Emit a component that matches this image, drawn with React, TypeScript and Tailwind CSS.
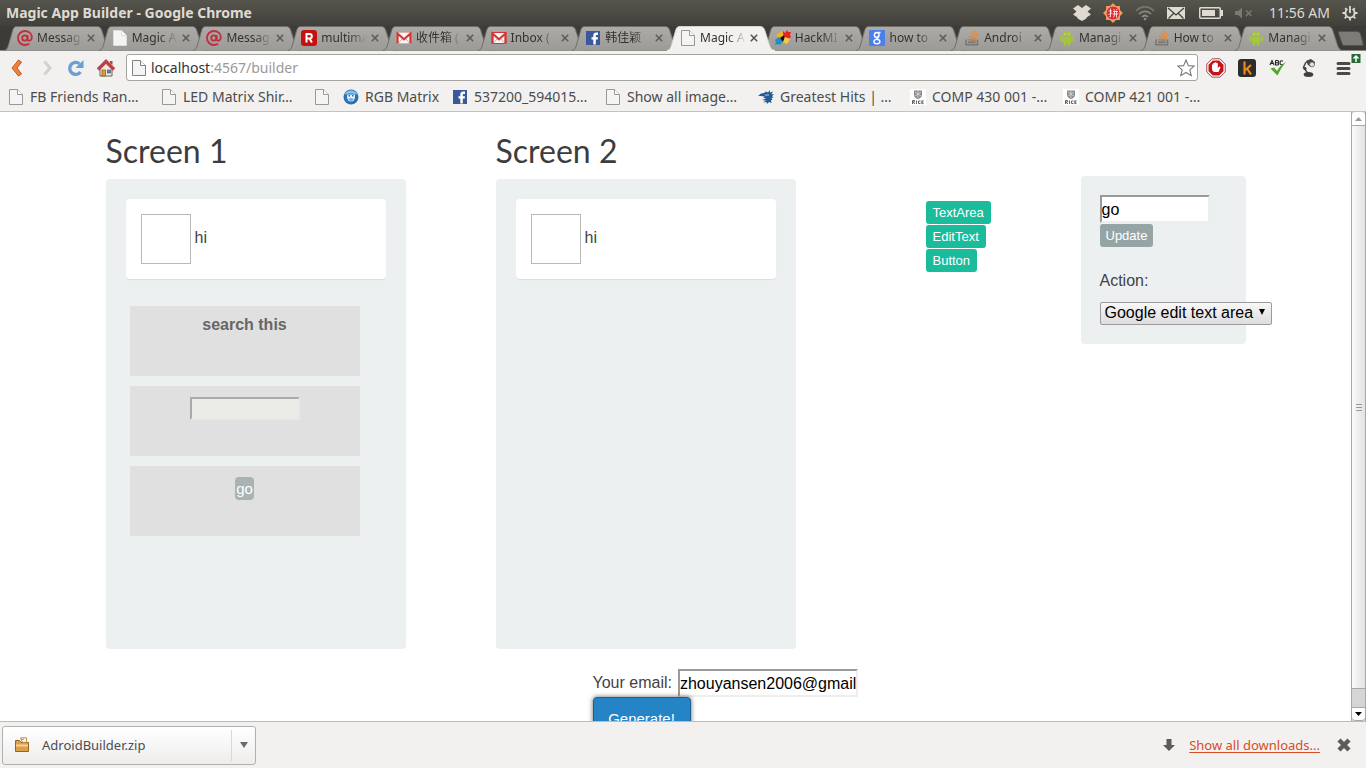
import type { ReactNode } from "react";

const ui = "font-['Noto_Sans','Noto_Sans_CJK_SC',sans-serif]";

/* ---------- icons ---------- */

function AtIcon() {
  return (
    <svg viewBox="0 0 16 16" className="size-4 shrink-0" fill="none" stroke="#c32d3c" strokeWidth="1.8">
      <circle cx="7.8" cy="8" r="2.6" />
      <path d="M10.6 5v4.2c0 2.2 3.4 2 4-.4C15.600 4.500 12.400 1 8.200 1 4 1 1 4 1 8s3 7 7 7c1.700 0 3-.4 4.200-1.200" />
    </svg>
  );
}

function PageIcon({ fill = "#f4f4f4", stroke = "#989896" }: { fill?: string; stroke?: string }) {
  return (
    <svg viewBox="0 0 16 16" className="size-4 shrink-0" fill={fill} stroke={stroke}>
      <path d="M1.500.5H9.500L14.500 5.500V15.500H1.500Z" />
      <path d="M9.500.5V5.500H14.500" fill="#fff" />
    </svg>
  );
}

function RedRIcon() {
  return (
    <svg viewBox="0 0 16 16" className="size-4 shrink-0">
      <rect width="16" height="16" rx="3" fill="#c5120f" />
      <path d="M5.500 12.500V4H8.500a2.200 2.200 0 0 1 0 4.600H5.500M8.500 8.600l2.400 3.900" fill="none" stroke="#fff" strokeWidth="2" />
    </svg>
  );
}

function MailIcon({ soft = false }: { soft?: boolean }) {
  return (
    <svg viewBox="0 0 16 16" className="size-4 shrink-0">
      <rect x="1" y="2.500" width="14" height="11" fill="#fbf4f2" stroke={soft ? "#d9a49c" : "#d5333a"} strokeWidth={soft ? 0.6 : 1} />
      <path d="M2 13.500 6.500 8.500M14 13.500 9.500 8.500" stroke="#d9aaa5" fill="none" />
      <path d="M1.600 13.500V3.500L8 9.300l6.400-5.800v10" fill="none" stroke="#cf3a36" strokeWidth="2.100" />
    </svg>
  );
}

function FacebookIcon() {
  return (
    <svg viewBox="0 0 16 16" className="size-4 shrink-0">
      <rect x="1" y="1" width="14" height="14" fill="#3b5998" />
      <path d="M8.300 14.500V9.500H6.500V7.200H8.300V5.600C8.300 3.500 9.400 2.600 11.200 2.600H13V4.900H11.700C11 4.900 10.800 5.200 10.800 5.900V7.200H13L12.700 9.500H10.800V14.500Z" fill="#fff" />
    </svg>
  );
}

function PinwheelIcon() {
  return (
    <svg viewBox="0 0 16 16" className="size-4 shrink-0">
      <path d="M8 1 10 3 12 0l1 2 3 0-1 3 1 2-3 2L8 7Z" fill="#e62424" />
      <path d="M1 5 7 1 9 6 5 9Z" fill="#f5b51b" />
      <path d="M0 10 4 7 8 11 5 15 3 14 0 15 1 12Z" fill="#1b8fcd" />
      <path d="M5 8 9 5 10 10 8 12Z" fill="#151515" />
      <path d="M10 7 15 9 12 14 8 12Z" fill="#f3cf3c" />
    </svg>
  );
}

function GoogleIcon() {
  return (
    <svg viewBox="0 0 16 16" className="size-4 shrink-0">
      <rect width="16" height="16" rx="1" fill="#4a80ee" />
      <g fill="none" stroke="#fff" strokeWidth="1.400">
        <ellipse cx="7.700" cy="5" rx="2.300" ry="2.500" />
        <path d="M9.500 2.500H11.500M9.300 7c-3 1.200-.8 1.800.7 2.700" />
        <ellipse cx="7.900" cy="11.600" rx="3" ry="2.200" />
      </g>
    </svg>
  );
}

function StackIcon() {
  return (
    <svg viewBox="0 0 16 16" className="size-4 shrink-0" fill="none">
      <path d="M2 9.500V14.700H13.500V9.500" stroke="#777" strokeWidth="1.600" />
      <path d="M4 12.300H11.500" stroke="#77736f" strokeWidth="1.600" />
      <path d="M4.200 9.700 11.700 10.400" stroke="#a98254" strokeWidth="1.600" />
      <path d="M5 6.600 12.200 8.700" stroke="#d18b45" strokeWidth="1.600" />
      <path d="M7 3.300 13 7.200M10.200.8 14.200 6" stroke="#f08a35" strokeWidth="1.700" />
    </svg>
  );
}

function AndroidIcon() {
  return (
    <svg viewBox="0 0 16 16" className="size-4 shrink-0" fill="#a4c639">
      <path d="M3.500 5.800a4.500 4.300 0 0 1 9 0Z" />
      <path d="M5 .8 6.300 2.800M11 .8 9.700 2.800" stroke="#a4c639" strokeWidth=".8" />
      <path d="M3.500 6.400h9v5.600a1 1 0 0 1-1 1h-7a1 1 0 0 1-1-1Z" />
      <rect x="1" y="6.300" width="1.900" height="5.200" rx=".9" />
      <rect x="13.100" y="6.300" width="1.900" height="5.200" rx=".9" />
      <rect x="5" y="12" width="2" height="4" rx="1" />
      <rect x="9" y="12" width="2" height="4" rx="1" />
      <circle cx="6" cy="4" r=".5" fill="#fff" />
      <circle cx="10" cy="4" r=".5" fill="#fff" />
    </svg>
  );
}

function RgbIcon() {
  return (
    <svg viewBox="0 0 16 16" className="size-4 shrink-0">
      <circle cx="8" cy="8" r="7.500" fill="#2872b5" />
      <path d="M1.500 6C3 0 13 0 14.500 6C12 4 4 4 1.500 6Z" fill="#8cc3ea" />
      <path d="M4 5.500H12V8A4 4.500 0 0 1 4 8Z" fill="#e4eef7" />
      <path d="M5.500 6H7V7.500H5.500ZM9 6H10.500V7.500H9Z" fill="#2872b5" />
      <path d="M5 10 8 9 11 10 8 12.500Z" fill="#78abd6" />
    </svg>
  );
}

function BirdIcon() {
  return (
    <svg viewBox="0 0 16 16" className="size-4 shrink-0" fill="#235d96">
      <path d="M0 7 3 4.500 6 4 8 2.500 10 3.500 12 1 12 3.500 15 2.500 13.500 5 16 5.500 14 7 15.500 8.500 13.500 9 14.500 11 13 11 13.500 14 11 13 9 15 8.500 13 5 13.500 8 11.500 4 11 8 9.500 5 8.500 7 7.500 3 7Z" />
      <path d="M7 6 11 6" stroke="#fff" strokeWidth=".7" />
    </svg>
  );
}

function CrestIcon() {
  return (
    <svg viewBox="0 0 16 16" className="size-4 shrink-0">
      <rect width="16" height="16" fill="#fff" />
      <path d="M4 1.500H12V6C12 8 10 9.500 8 10 6 9.500 4 8 4 6Z" fill="#8b8b8b" />
      <path d="M5 3 11 7M11 3 5 7M8 2V9" stroke="#ddd" strokeWidth=".8" />
      <path d="M2.500 15V11.500H4.500V13H2.500L5 15M6.500 11.500V15M10.500 12H8.500V14.500H10.500M13.500 11.800H11.800V14.600H13.500M11.800 13.200H13.300" stroke="#555" strokeWidth=".9" fill="none" />
    </svg>
  );
}

function ZipIcon() {
  return (
    <svg viewBox="0 0 16 16" className="size-4 shrink-0">
      <path d="M1.500 3.500H5.500L7 5.500H14.500V14.500H1.500Z" fill="#dca04a" stroke="#9a641c" />
      <path d="M2 7.500H14V9.500H2Z" fill="#f6d391" />
      <path d="M6.500.8 12.500.8V5.500H8.500Z" fill="#fbf5e6" stroke="#ad7a33" strokeWidth=".8" />
      <path d="M7 3 10 2" stroke="#ad7a33" strokeWidth=".8" />
    </svg>
  );
}

/* ---------- window chrome ---------- */

function TitleBar() {
  return (
    <header className="flex h-[26px] shrink-0 items-center justify-between bg-linear-to-b from-[#56554d] to-[#403f3a] pr-2 pl-[6px] text-[#dfdbd2]">
      <h1 className="text-[14px] leading-6 font-bold">Magic App Builder - Google Chrome</h1>
      <div className="flex items-center text-[14px]">
        <svg viewBox="0 0 18 16" className="mr-3 h-4 w-[18px]" fill="#dfdbd2">
          <path d="M5 0 9 3 13 0 18 3.500 14.500 6.500 18 9.500 13.500 12.500V13.500L9 16 4.500 13.500V12.500L0 9.500 3.500 6.500 0 3.500Z" />
        </svg>
        <svg viewBox="0 0 20 20" className="mr-3 size-5">
          <path d="M10 0 13 3H17V7L20 10 17 13V17H13L10 20 7 17H3V13L0 10 3 7V3H7Z" fill="#f0964e" />
          <circle cx="10" cy="10" r="7" fill="#d8283c" stroke="#f7c089" strokeWidth=".8" />
          <path d="M7.500 5.500V14L6.500 13.500M5.500 8H9M5.500 11.500 9 10M10.500 6 11.500 7.500M14 6 13 7.500M10 8.500H15M9.500 11H15.200M11.500 8.500V12L10.500 14.500M13.500 8.500V14.500" stroke="#ffeadf" strokeWidth=".9" fill="none" />
        </svg>
        <svg viewBox="0 0 20 16" className="mr-3 h-4 w-5" fill="none" stroke="#8e8c84" strokeWidth="1.700">
          <path d="M1 6C6 .5 14 .5 19 6" stroke="#77756d" />
          <path d="M4 9C7.500 5.500 12.500 5.500 16 9M7 12C9 10 11 10 13 12" />
          <circle cx="10" cy="14" r="1.300" fill="#8e8c84" stroke="none" />
        </svg>
        <svg viewBox="0 0 18 14" className="mr-[14px] h-[14px] w-[18px]">
          <rect y="1" width="18" height="12" fill="#dfdbd2" />
          <path d="M1 2 9 9 17 2M1.500 12.500 7 7M16.500 12.500 11 7" fill="none" stroke="#3f3e39" strokeWidth="1.200" />
        </svg>
        <svg viewBox="0 0 24 14" className="mr-3 h-[14px] w-6">
          <rect x=".75" y="1.750" width="20.500" height="10.500" rx="1" fill="none" stroke="#dfdbd2" strokeWidth="1.500" />
          <rect x="3" y="4" width="13" height="6" fill="#dfdbd2" />
          <rect x="22" y="4" width="2" height="6" fill="#dfdbd2" />
        </svg>
        <svg viewBox="0 0 18 14" className="mr-4 h-[14px] w-[18px]" fill="#7b7971">
          <path d="M0 5H3L7 1.500V12.500L3 9H0Z" />
          <path d="M11 4.500 16.500 10M16.500 4.500 11 10" stroke="#7b7971" strokeWidth="1.500" />
        </svg>
        <span className="mr-3 leading-6">11:56 AM</span>
        <svg viewBox="0 0 16 16" className="size-4" fill="none" stroke="#dfdbd2">
          <path d="M5.500 4.100A4.600 4.600 0 1 0 10.500 4.100" strokeWidth="1.800" />
          <path d="M8 1V8" strokeWidth="1.800" />
          <path d="M3.200 3.200 4.300 4.300M12.800 3.200 11.700 4.300M.5 8H3M13 8H15.500M2.700 13.300 4.300 11.700M13.300 13.300 11.700 11.700M8 13V15.500" strokeWidth="1.800" />
        </svg>
      </div>
    </header>
  );
}

type TabInfo = { title: string; icon: ReactNode; active?: boolean };

const tabs: TabInfo[] = [
  { title: "Messag", icon: <AtIcon /> },
  { title: "Magic A", icon: <PageIcon stroke="#dddcda" /> },
  { title: "Messag", icon: <AtIcon /> },
  { title: "multima", icon: <RedRIcon /> },
  { title: "收件箱 (", icon: <MailIcon soft /> },
  { title: "Inbox (", icon: <MailIcon /> },
  { title: "韩佳颖", icon: <FacebookIcon /> },
  { title: "Magic A", icon: <PageIcon />, active: true },
  { title: "HackMI", icon: <PinwheelIcon /> },
  { title: "how to", icon: <GoogleIcon /> },
  { title: "Androi", icon: <StackIcon /> },
  { title: "Managi", icon: <AndroidIcon /> },
  { title: "How to", icon: <StackIcon /> },
  { title: "Managi", icon: <AndroidIcon /> },
];

function Tab({ title, icon, active }: TabInfo) {
  return (
    <div className={active ? "relative z-10 min-w-0 flex-1" : "relative min-w-0 flex-1"}>
      <svg viewBox="0 0 108 25" preserveAspectRatio="none" className="absolute top-0 left-0 h-[25px] w-[114%]">
        <defs>
          <linearGradient id="tab-shade" x1="0" y1="0" x2="0" y2="1">
            <stop offset="0" stopColor="#acaba8" />
            <stop offset="1" stopColor="#9b9a96" />
          </linearGradient>
        </defs>
        <path
          d="M0 24.500C3 24 3.500 22 4.500 19L8.500 5C9.500 1.500 10.500.5 13 .5H93C95.500.5 97 1.500 98 5L102.500 19C103.500 22 104.500 24 108 24.500"
          fill={active ? "#f2f1f0" : "url(#tab-shade)"}
          stroke={active ? "#d5d4d1" : "#6f6e69"}
        />
        {active && <path d="M0 25H108" stroke="#f2f1f0" strokeWidth="2" />}
      </svg>
      <div className="relative flex h-6 items-center pl-[13px]">
        {icon}
        <span className="ml-1 w-[46px] mask-r-from-60% text-[12px] leading-6 whitespace-nowrap text-[#33322e]">{title}</span>
        <button aria-label={`Close ${title}`} className="ml-1 flex size-2 shrink-0 items-center">
          <svg viewBox="0 0 8 8" className="size-2" stroke={active ? "#555" : "#5d5c58"} strokeWidth="1.600">
            <path d="M.8.8 7.200 7.200M7.200.8.8 7.200" />
          </svg>
        </button>
      </div>
    </div>
  );
}

function TabStrip() {
  return (
    <nav aria-label="Tabs" className="flex h-6 shrink-0 bg-[#3c3b37] pl-1">
      {tabs.map((tab, i) => (
        <Tab key={i} {...tab} />
      ))}
      <button aria-label="New tab" className="ml-2 flex w-7 items-start pt-[5px]">
        <svg viewBox="0 0 26 15" className="h-[15px] w-[26px]">
          <path d="M1 .5H19C21 .5 22 1.500 22.500 3L25 12C25.300 14 25 14.500 23.500 14.500H7C5 14.500 4.500 14 4 12.500L.8 3C.5 1.500.5.5 1 .5Z" fill="#7c7b76" stroke="#55544f" />
        </svg>
      </button>
    </nav>
  );
}

function Toolbar() {
  return (
    <div className="flex h-[34px] shrink-0 items-center border-t border-[#8a8985] bg-[#f2f1f0]">
      <button aria-label="Back" className="ml-[10px]">
        <svg viewBox="0 0 14 18" className="h-[18px] w-[14px]">
          <path d="M8.500 1 11.500 3 7 9 11.500 15 8.500 17 2 9Z" fill="#ee8040" stroke="#c65420" />
        </svg>
      </button>
      <button aria-label="Forward" className="ml-[17px]">
        <svg viewBox="0 0 14 18" className="h-[18px] w-[14px]" fill="none" stroke="#d2d1cf" strokeWidth="3">
          <path d="M3.500 2.500 9 9 3.500 15.500" />
        </svg>
      </button>
      <button aria-label="Reload" className="ml-3">
        <svg viewBox="0 0 18 18" className="size-[18px]">
          <path d="M13.500 13A6 6 0 1 1 12.500 4.700" fill="none" stroke="#6a9fd6" strokeWidth="3.400" />
          <path d="M16.500 1V9H8.500Z" fill="#6a9fd6" />
        </svg>
      </button>
      <button aria-label="Home" className="ml-3">
        <svg viewBox="0 0 18 18" className="size-[18px]">
          <path d="M3 9 9 3 15 9V17H3Z" fill="#f4ead8" stroke="#765d56" />
          <path d="M13 2H15.500V6L13 4Z" fill="#a34b4b" />
          <path d="M1 10.500 9 2.500 17 10.500" fill="none" stroke="#b9414a" strokeWidth="3.400" />
          <rect x="5" y="11" width="3.500" height="6" fill="#d99b3e" stroke="#75572c" strokeWidth=".7" />
          <rect x="10.500" y="11" width="3" height="3" fill="#5a87c2" stroke="#49556a" strokeWidth=".7" />
        </svg>
      </button>
      <div className="ml-[11px] flex h-[27px] min-w-0 flex-1 items-center rounded-[3px] border border-[#a5a39e] bg-white pr-[6px] pl-1">
        <PageIcon stroke="#83827f" />
        <div className="relative ml-px h-6 min-w-0 flex-1">
          <input
            aria-label="Address"
            defaultValue="localhost:4567/builder"
            className="h-6 w-full bg-transparent px-[3px] text-[14px] text-transparent outline-none"
          />
          <span aria-hidden="true" className="pointer-events-none absolute top-0 left-[3px] text-[14px] leading-6 text-[#9a9996]">
            <span className="text-[#33322f]">localhost</span>:4567/builder
          </span>
        </div>
        <button aria-label="Bookmark this page">
          <svg viewBox="0 0 18 18" className="size-[18px] translate-x-1" fill="#fff" stroke="#7a7a78" strokeWidth="1.100">
            <path d="M9 1 11.400 6.600 17.300 7 12.800 10.900 14.300 16.700 9 13.500 3.700 16.700 5.200 10.900.7 7 6.600 6.600Z" />
          </svg>
        </button>
      </div>
      <button aria-label="Ad blocker" className="ml-2">
        <svg viewBox="0 0 20 20" className="size-5">
          <path d="M6 .8H14L19.200 6V14L14 19.200H6L.8 14V6Z" fill="#fff" stroke="#a34749" />
          <path d="M6.800 2.500H13.200L17.500 6.800V13.200L13.200 17.500H6.800L2.500 13.200V6.800Z" fill="#c4141c" />
          <path d="M6 10V6.500H7.300V9.500V5H8.800V9V4.300H10.300V9V5H11.800V10L13.500 8.500 14.500 9.300 12.500 14H8C6.500 13 6 12 6 10Z" fill="#fff" />
        </svg>
      </button>
      <button aria-label="Kippt" className="ml-3">
        <svg viewBox="0 0 18 18" className="size-[18px]">
          <rect width="18" height="18" rx="3" fill="#2d2d2e" />
          <path d="M6.500 2.500V15.500M13 6 7.500 11M9 9.500 13 15.500" stroke="#e98b1c" strokeWidth="2.200" fill="none" />
        </svg>
      </button>
      <button aria-label="Spelling" className="ml-3">
        <svg viewBox="0 0 20 20" className="size-5">
          <g fill="none" stroke="#222" strokeWidth="1.100">
            <path d="M2 7 4 2.500 6 7M3 5.500H5M7.500 2.500V7H9.500C11 7 11 5 9.500 4.800 11 4.500 11 2.500 9.500 2.500H7.500M7.500 4.800H9.500M15 3.200C13 2 12 3.500 12 4.700 12 6.500 13.500 7.500 15 6.500" />
          </g>
          <path d="M2.500 10.500 6 9.500 9 13C11 9 14 6 18 4 14.500 8 12 12 9.500 17.500Z" fill="#51a62b" />
        </svg>
      </button>
      <button aria-label="Lamp" className="ml-3">
        <svg viewBox="0 0 18 20" className="h-5 w-[18px]">
          <path d="M9.500 17.500 3.500 9.500 5.500 5 8 3" fill="none" stroke="#4a4a4a" strokeWidth="1.500" />
          <path d="M6.500 2.500 11 1 15 4 14.500 7.500 10.500 9 7.500 6.500Z" fill="#474747" />
          <circle cx="12" cy="6.500" r="2.400" fill="#e4e4e4" stroke="#666" strokeWidth=".8" />
          <ellipse cx="8.500" cy="16.500" rx="4.800" ry="2.500" fill="#3f3f3f" />
          <circle cx="5" cy="10.500" r="1.600" fill="#3f3f3f" />
        </svg>
      </button>
      <button aria-label="Menu" className="mr-[3px] ml-[18px] flex items-center">
        <svg viewBox="0 0 27 30" className="h-[30px] w-[27px]">
          <path d="M2 10.500H13M2 15.500H13M2 20.500H13" stroke="#4a4a48" strokeWidth="3" strokeLinecap="round" />
          <rect x="15.500" y="1" width="9" height="9" fill="#266b35" />
          <path d="M20 9V3M17.500 5.500 20 3 22.500 5.500" stroke="#fff" strokeWidth="1.500" fill="none" />
        </svg>
      </button>
    </div>
  );
}

const bookmarks: { label: string; icon: ReactNode; width: string }[] = [
  { label: "FB Friends Ran…", icon: <PageIcon />, width: "w-[153px]" },
  { label: "LED Matrix Shir…", icon: <PageIcon />, width: "w-[153px]" },
  { label: "", icon: <PageIcon />, width: "w-[29px]" },
  { label: "RGB Matrix", icon: <RgbIcon />, width: "w-[109px]" },
  { label: "537200_594015…", icon: <FacebookIcon />, width: "w-[153px]" },
  { label: "Show all image…", icon: <PageIcon />, width: "w-[153px]" },
  { label: "Greatest Hits | …", icon: <BirdIcon />, width: "w-[152px]" },
  { label: "COMP 430 001 -…", icon: <CrestIcon />, width: "w-[153px]" },
  { label: "COMP 421 001 -…", icon: <CrestIcon />, width: "w-[153px]" },
];

function BookmarksBar() {
  return (
    <nav aria-label="Bookmarks" className="flex h-7 shrink-0 items-center border-b border-[#c4c3c0] bg-[#f2f1f0] pb-px pl-2">
      {bookmarks.map((b, i) => (
        <a key={i} href="#" aria-label={b.label || "Untitled bookmark"} className={`${b.width} flex shrink-0 items-center gap-[6px] text-[14px] leading-6 whitespace-nowrap text-[#4c4c4c]`}>
          {b.icon}
          {b.label}
        </a>
      ))}
    </nav>
  );
}

/* ---------- builder page ---------- */

const field = "border-2 border-t-[#9a9a9a] border-l-[#9a9a9a] border-r-[#eeeeee] border-b-[#eeeeee] bg-white pt-px text-[16px] text-black outline-none";

function Screen({ name, children }: { name: string; children?: ReactNode }) {
  return (
    <section className="w-[390px] shrink-0">
      <h2 className="mb-[11px] font-['Lato',sans-serif] text-[32px] leading-[35px] text-[#3d3d3d]">{name}</h2>
      <div className="h-[470px] w-[300px] rounded-[4px] bg-[#ecf0f1] p-5">
        <div className="flex h-20 items-center gap-1 rounded-[4px] bg-white px-[15px] shadow-[0_1px_1px_rgba(0,0,0,0.08)]">
          <div className="size-[50px] border border-[#b9b9b9]" />
          <span className="pb-[2px]">hi</span>
        </div>
        <div className="mt-[27px] ml-1 flex w-[230px] flex-col gap-[10px]">{children}</div>
      </div>
    </section>
  );
}

function Block({ children }: { children: ReactNode }) {
  return <div className="flex h-[70px] items-start justify-center bg-[#e0e0e0] pt-[11px]">{children}</div>;
}

const paletteButton = "h-[23px] rounded-[3px] bg-[#1abc9c] px-[7px] text-[13px] leading-[23px] text-white";

function Builder() {
  return (
    <main className="min-w-0 flex-1 overflow-hidden font-['Liberation_Sans',Arial,sans-serif] text-[16px] text-[#434343]">
      <div className="mx-auto w-full max-w-[1140px] pt-[21px]">
        <div className="flex">
          <Screen name="Screen 1">
            <Block>
              <span className="leading-4 font-bold text-[#666]">search this</span>
            </Block>
            <Block>
              <input aria-label="Search" className="h-[23px] w-[110px] border-2 border-t-[#aaaaa8] border-r-[#e8e8e5] border-b-[#e8e8e5] border-l-[#aaaaa8] bg-[#ebebe7]" />
            </Block>
            <Block>
              <button className="h-[23px] rounded-[4px] bg-[#a7b4b2] px-px text-[15px] leading-[23px] text-white">go</button>
            </Block>
          </Screen>
          <Screen name="Screen 2" />
          <div className="mt-[68px] ml-10 flex w-[155px] shrink-0 flex-col items-start gap-px">
            <button className={paletteButton}>TextArea</button>
            <button className={paletteButton}>EditText</button>
            <button className={paletteButton}>Button</button>
          </div>
          <form className="mt-[43px] flex h-[168px] w-[165px] shrink-0 flex-col items-start rounded-[4px] bg-[#ecf0f1] px-[19px] pt-[19px]">
            <input aria-label="Text" defaultValue="go" className={`${field} h-7 w-[110px]`} />
            <button type="button" className="mt-px h-[23px] rounded-[3px] bg-[#95a5a6] px-[6px] text-[13px] leading-[23px] text-white">
              Update
            </button>
            <label htmlFor="action" className="mt-[22px] leading-6">
              Action:
            </label>
            <div className="relative mt-2">
              <select id="action" className="h-[23px] w-[172px] appearance-none rounded-[2px] border border-[#9b9b9b] bg-linear-to-b from-[#f8f8f8] to-[#dddddd] pl-1 text-[16px] leading-5 text-black">
                <option>Google edit text area</option>
              </select>
              <svg viewBox="0 0 6 6" className="pointer-events-none absolute top-2 right-[7px] size-[6px]">
                <path d="M0 0H6L3 6Z" />
              </svg>
            </div>
          </form>
        </div>
        <form className="mt-5 flex flex-col items-start pl-[487px]">
          <div className="flex items-center gap-[6px]">
            <label htmlFor="email">Your email:</label>
            <input id="email" defaultValue="zhouyansen2006@gmail.com" className={`${field} h-7 w-[180px]`} />
          </div>
          <button type="button" className="h-11 w-[98px] rounded-[4px] border border-[#1c5f92] bg-[#2484c6] text-[15px] text-white shadow-[0_0_5px_rgba(0,0,0,0.6)]">
            Generate!
          </button>
        </form>
      </div>
    </main>
  );
}

function ScrollBar() {
  return (
    <div aria-hidden="true" className="flex w-[15px] shrink-0 flex-col border-x border-[#a8a8a8] bg-[#d5d5d5]">
      <div className="flex h-[14px] items-center justify-center rounded-t-[4px] border-b border-[#a8a8a8] bg-white">
        <svg viewBox="0 0 7 4" className="h-1 w-[7px]" fill="#999">
          <path d="M0 4 3.500 0 7 4Z" />
        </svg>
      </div>
      <div className="mb-[18px] flex flex-1 flex-col items-center justify-center gap-[2px] border-b border-[#a8a8a8] bg-linear-to-r from-[#fafafa] to-[#e2e2e2]">
        <div className="h-px w-[6px] bg-[#999]" />
        <div className="h-px w-[6px] bg-[#999]" />
        <div className="h-px w-[6px] bg-[#999]" />
      </div>
      <div className="flex h-[14px] items-center justify-center rounded-b-[4px] border-y border-[#a8a8a8] bg-white">
        <svg viewBox="0 0 7 4" className="h-1 w-[7px]" fill="#000">
          <path d="M0 0H7L3.500 4Z" />
        </svg>
      </div>
    </div>
  );
}

function DownloadShelf() {
  return (
    <footer className="flex h-[47px] shrink-0 items-center border-t border-[#bcbbb8] bg-[#f2f1f0] pr-[15px] pl-[2px] text-[13px]">
      <div className="flex h-[39px] w-[254px] items-center rounded-[3px] border border-[#b2b0ac] bg-linear-to-b from-white to-[#eeedec] text-[#4c4c4c]">
        <button className="flex flex-1 items-center gap-3 pl-[11px] leading-6">
          <ZipIcon />
          AdroidBuilder.zip
        </button>
        <button aria-label="Download options" className="flex h-[31px] w-6 items-center justify-center border-l border-[#d9d8d6]">
          <svg viewBox="0 0 8 6" className="h-[6px] w-2" fill="#6b6b6b">
            <path d="M0 0H8L4 6Z" />
          </svg>
        </button>
      </div>
      <svg viewBox="0 0 12 12" className="mr-[14px] ml-auto size-3" fill="#5c5c5a">
        <path d="M3.500 0H8.500V6H12L6 12 0 6H3.500Z" />
      </svg>
      <a href="#" className="leading-6 text-[#d64d26] underline underline-offset-2">
        Show all downloads...
      </a>
      <button aria-label="Close downloads" className="ml-[17px]">
        <svg viewBox="0 0 14 14" className="size-[14px]" stroke="#5c5c5a" strokeWidth="4.400">
          <path d="M2 2 12 12M12 2 2 12" />
        </svg>
      </button>
    </footer>
  );
}

export default function App() {
  return (
    <div className={`${ui} flex h-screen flex-col overflow-hidden bg-white`}>
      <TitleBar />
      <TabStrip />
      <Toolbar />
      <BookmarksBar />
      <div className="flex min-h-0 flex-1">
        <Builder />
        <ScrollBar />
      </div>
      <DownloadShelf />
    </div>
  );
}
